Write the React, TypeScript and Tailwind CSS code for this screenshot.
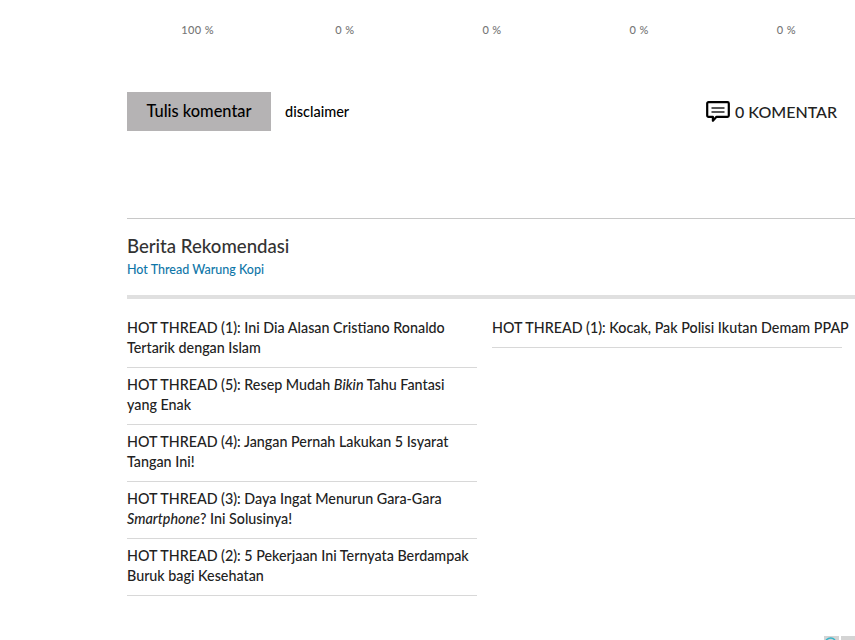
const percents = ["100 %", "0 %", "0 %", "0 %", "0 %"];

function CommentIcon() {
  return (
    <svg width="24" height="22" viewBox="0 0 24 22" fill="none" className="shrink-0">
      <path
        d="M2.5 1.2h19a1.3 1.3 0 0 1 1.3 1.3v12a1.3 1.3 0 0 1-1.3 1.3H10.5l-3.6 4v-4H2.5a1.3 1.3 0 0 1-1.3-1.3v-12a1.3 1.3 0 0 1 1.3-1.3z"
        stroke="#000"
        strokeWidth="2.2"
        strokeLinejoin="round"
      />
      <path d="M5.5 7h13M5.5 11h13" stroke="#222" strokeWidth="1.3" />
    </svg>
  );
}

function ThreadItem({ children }: { children: React.ReactNode }) {
  return (
    <li className="mb-[7px] border-b border-[#d8d8d8] pb-[9px] text-[14.3px] leading-[20px] font-medium text-[#222]">
      {children}
    </li>
  );
}

export default function App() {
  return (
    <div className="relative h-[640px] w-[855px] overflow-hidden bg-white font-['Lato','Liberation_Sans',sans-serif]">
      <div className="ml-[124px] grid w-[736px] grid-cols-5 pt-[22px] text-center text-[11px] leading-[15px] font-medium tracking-[0.4px] text-[#777]">
        {percents.map((p, i) => (
          <span key={i}>{p}</span>
        ))}
      </div>

      <div className="ml-[127px] mt-[55px] flex h-[39px] items-center pr-[18px]">
        <button className="h-[39px] w-[144px] bg-[#b5b3b4] text-[16.4px] font-medium text-black">Tulis komentar</button>
        <span className="ml-[14px] mt-[1px] text-[14.5px] font-medium text-black">disclaimer</span>
        <div className="ml-auto flex items-center gap-[5px]">
          <CommentIcon />
          <span className="mt-[1px] text-[16px] font-medium text-[#222]">0 KOMENTAR</span>
        </div>
      </div>

      <section className="ml-[127px] mt-[87px] border-t border-[#c8c8c8]">
        <h2 className="mt-[15px] text-[18.6px] leading-[24px] font-medium text-[#333]">Berita Rekomendasi</h2>
        <p className="mt-[3px] text-[12.5px] leading-[18px] font-medium text-[#0e76a8]">Hot Thread Warung Kopi</p>
        <div className="mt-[16px] h-[4px] bg-[#e0e0e0]" />

        <div className="mt-[19px] flex gap-[15px]">
          <ul className="w-[350px]">
            <ThreadItem>HOT THREAD (1): Ini Dia Alasan Cristiano Ronaldo Tertarik dengan Islam</ThreadItem>
            <ThreadItem>
              HOT THREAD (5): Resep Mudah <i>Bikin</i> Tahu Fantasi yang Enak
            </ThreadItem>
            <ThreadItem>HOT THREAD (4): Jangan Pernah Lakukan 5 Isyarat Tangan Ini!</ThreadItem>
            <ThreadItem>
              HOT THREAD (3): Daya Ingat Menurun Gara-Gara <i>Smartphone</i>? Ini Solusinya!
            </ThreadItem>
            <ThreadItem>HOT THREAD (2): 5 Pekerjaan Ini Ternyata Berdampak Buruk bagi Kesehatan</ThreadItem>
          </ul>
          <ul className="w-[350px] whitespace-nowrap">
            <ThreadItem>HOT THREAD (1): Kocak, Pak Polisi Ikutan Demam PPAP</ThreadItem>
          </ul>
        </div>
      </section>

      <div className="absolute bottom-0 right-0 flex gap-[2px]">
        <svg width="15" height="4" viewBox="0 0 15 4" className="bg-[#d4d4d4]">
          <path d="M2 4q5-4 9 0" fill="none" stroke="#35b5c9" strokeWidth="1.5" />
        </svg>
        <div className="h-[4px] w-[14px] bg-[#d4d4d4]" />
      </div>
    </div>
  );
}
